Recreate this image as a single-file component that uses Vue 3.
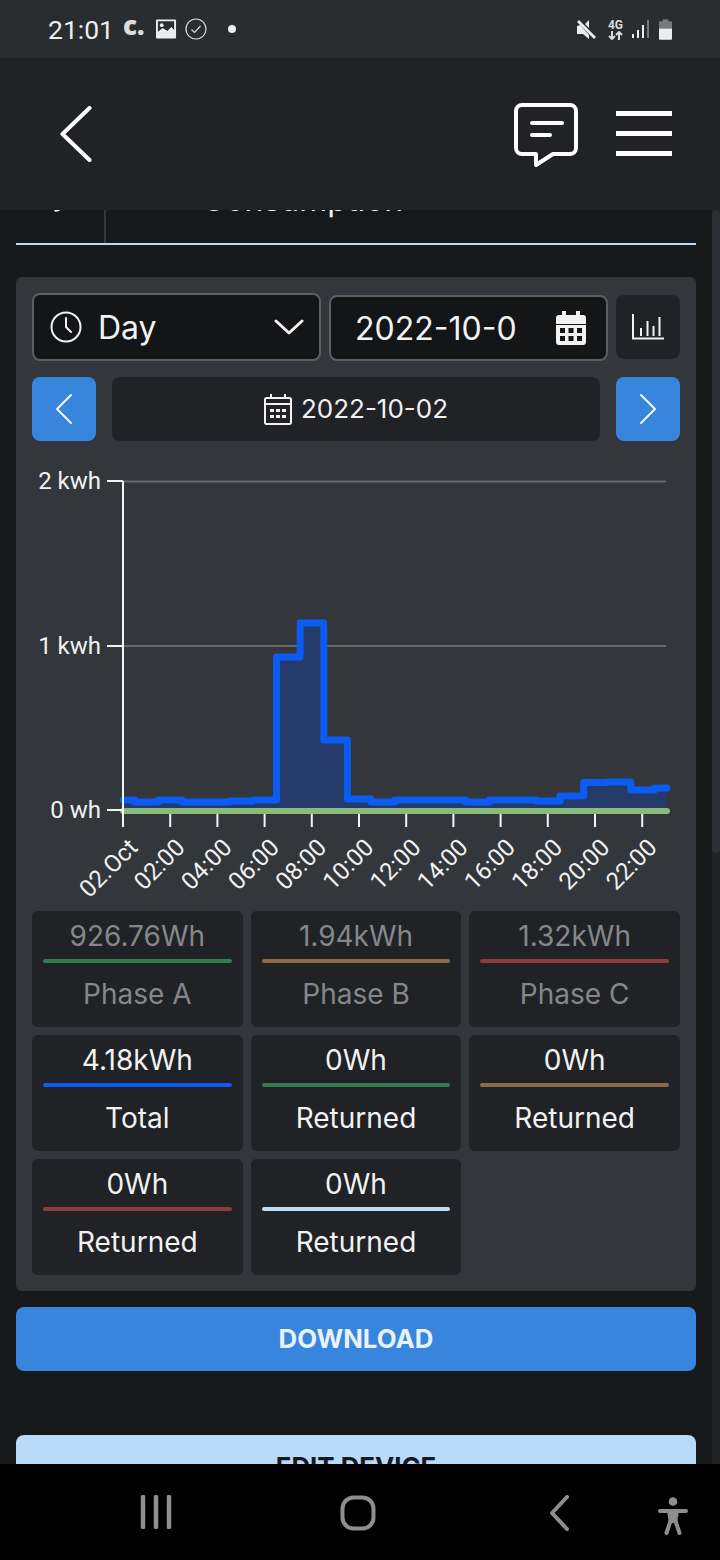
<script setup>
const hx = (h) => 123 + 23.62 * h
const values = [800,802,800,802,802,801,800,657,623,740,799,802,800,800,800,802,800,800,801,796,782.5,782,790,788]
let pts = []
values.forEach((v, i) => {
  const a = i === 0 ? 123 : hx(i) - 11.8
  const b = i === 23 ? 667 : hx(i) + 11.8
  pts.push(`${a.toFixed(1)},${v}`, `${b.toFixed(1)},${v}`)
})
const linePts = pts.join(' ')
const areaPts = `123,810 ${linePts} 667,810`
const yLabels = [
  { t: '2 kwh', y: 481 },
  { t: '1 kwh', y: 646 },
  { t: '0 wh', y: 810 }
]
const xLabels = ['02.Oct','02:00','04:00','06:00','08:00','10:00','12:00','14:00','16:00','18:00','20:00','22:00']
const ticks = xLabels.map((t, i) => ({ t, x: 123 + 47.2 * i }))
const cards = [
  { v: '926.76Wh', l: 'Phase A', c: '#2f7d50', off: true },
  { v: '1.94kWh', l: 'Phase B', c: '#8c6a45', off: true },
  { v: '1.32kWh', l: 'Phase C', c: '#8e3a3e', off: true },
  { v: '4.18kWh', l: 'Total', c: '#0b5cf2' },
  { v: '0Wh', l: 'Returned', c: '#2f7d50' },
  { v: '0Wh', l: 'Returned', c: '#8c6a45' },
  { v: '0Wh', l: 'Returned', c: '#8e3a3e' },
  { v: '0Wh', l: 'Returned', c: '#bcdcf8' }
]
</script>

<template>
  <div class="phone">
    <div class="status">
      <div class="status-left">
        <span class="time">21:01</span>
        <span class="c-mark">c.</span>
        <svg width="21" height="20" viewBox="0 0 22 20"><path fill="#eceded" fill-rule="evenodd" d="M1 0h19a1 1 0 0 1 1 1v18a1 1 0 0 1-1 1H1a1 1 0 0 1-1-1V1a1 1 0 0 1 1-1zM2 2v11l5-4 5 3 4-4 3 3V2z"/><circle cx="6" cy="6" r="2" fill="#eceded"/></svg>
        <svg class="check" width="22" height="22" viewBox="0 0 22 22"><circle cx="11" cy="11" r="10" fill="none" stroke="#d8d9da" stroke-width="1.2"/><path d="M6.5 11.5l3 3 6-6.5" fill="none" stroke="#d8d9da" stroke-width="1.2"/></svg>
        <span class="dot"></span>
      </div>
      <div class="status-right">
        <svg class="mute" width="20" height="21" viewBox="0 0 20 21"><path fill="#eceded" d="M0 7l3-1 9 10v4l-6-5H0zM12 1v8L8 5zM2 1l17 17-2 2L0 3z"/></svg>
        <div class="four-g"><span>4G</span><svg width="15" height="9" viewBox="0 0 15 9"><path fill="none" stroke="#d9dada" stroke-width="2" d="M4 0v8M1 5l3 3 3-3M11 9V1M8 4l3-3 3 3"/></svg></div>
        <svg width="18" height="20" viewBox="0 0 18 20"><rect x="0" y="15" width="2" height="4" fill="#eceded"/><rect x="5" y="11" width="2" height="8" fill="#eceded"/><rect x="10" y="6" width="2" height="13" fill="#eceded"/><rect x="15" y="1" width="2" height="18" fill="#77797b"/></svg>
        <svg width="13" height="21" viewBox="0 0 14 22"><path fill="#77797b" d="M4 0h6v2h3a1 1 0 0 1 1 1v7H0V3a1 1 0 0 1 1-1h3z"/><path fill="#eceded" d="M0 10h14v11a1 1 0 0 1-1 1H1a1 1 0 0 1-1-1z"/></svg>
      </div>
    </div>

    <header class="topbar">
      <svg class="back" width="32" height="56" viewBox="0 0 32 56"><path d="M29.500 2L2.500 28l27 26" fill="none" stroke="#fff" stroke-width="4" stroke-linecap="round" stroke-linejoin="round"/></svg>
      <div class="top-actions">
        <svg width="64" height="64" viewBox="0 0 64 64"><path d="M8 2h48a6 6 0 0 1 6 6v37a6 6 0 0 1-6 6H39l-17 11V51H8a6 6 0 0 1-6-6V8a6 6 0 0 1 6-6z" fill="none" stroke="#fff" stroke-width="4" stroke-linejoin="round"/><path d="M18 20h30M18 32h18" stroke="#fff" stroke-width="4" stroke-linecap="round" fill="none"/></svg>
        <div class="burger"><i></i><i></i><i></i></div>
      </div>
    </header>

    <main class="content">
      <div class="tabs">
        <div class="tab tab-a">y</div>
        <div class="tab tab-b">Consumption</div>
      </div>

      <section class="panel">
        <div class="row row-top">
          <div class="field select">
            <svg width="32" height="32" viewBox="0 0 32 32"><circle cx="16" cy="16" r="14.500" fill="none" stroke="#f2f2f2" stroke-width="2"/><path d="M16 7v9l5 5" fill="none" stroke="#f2f2f2" stroke-width="2" stroke-linecap="round"/></svg>
            <span class="field-text">Day</span>
            <svg class="chev" width="30" height="18" viewBox="0 0 30 18"><path d="M2 3l13 12L28 3" fill="none" stroke="#f2f2f2" stroke-width="3" stroke-linecap="round" stroke-linejoin="round"/></svg>
          </div>
          <div class="field date">
            <span class="field-text">2022-10-0</span>
            <svg width="30" height="34" viewBox="0 0 30 34"><path fill="#f2f2f2" fill-rule="evenodd" d="M6 0h4v4h10V0h4v4h3a3 3 0 0 1 3 3v6H0V7a3 3 0 0 1 3-3h3zM0 14h30v17a3 3 0 0 1-3 3H3a3 3 0 0 1-3-3zM4 17v5h5v-5zM12.500 17v5h5v-5zM21 17v5h5v-5zM4 25v5h5v-5zM12.500 25v5h5v-5zM21 25v5h5v-5z"/></svg>
          </div>
          <button class="icon-btn dark">
            <svg width="32" height="26" viewBox="0 0 32 26"><path d="M1 0v24.500h32M9 14v8M15.500 7v15M21.500 12v10M27.500 3v19" fill="none" stroke="#f2f2f2" stroke-width="2"/></svg>
          </button>
        </div>

        <div class="row row-nav">
          <button class="icon-btn blue">
            <svg width="16" height="30" viewBox="0 0 16 30"><path d="M15 1L1 15l14 14" fill="none" stroke="#f2f7fd" stroke-width="2" stroke-linecap="round" stroke-linejoin="round"/></svg>
          </button>
          <div class="date-bar">
            <svg width="28" height="32" viewBox="0 0 28 32"><path d="M2.500 5h23a1.500 1.500 0 0 1 1.500 1.500v23a1.500 1.500 0 0 1-1.500 1.500h-23A1.500 1.500 0 0 1 1 29.500v-23A1.500 1.500 0 0 1 2.500 5zM1 11h26M7 1v4M21 1v4" fill="none" stroke="#f2f2f2" stroke-width="2"/><path fill="#f2f2f2" d="M6 16h4v3H6zM12 16h4v3h-4zM18 16h4v3h-4zM6 22h4v3H6zM12 22h4v3h-4zM18 22h4v3h-4z"/></svg>
            <span>2022-10-02</span>
          </div>
          <button class="icon-btn blue">
            <svg width="16" height="30" viewBox="0 0 16 30"><path d="M1 1l14 14L1 29" fill="none" stroke="#f2f7fd" stroke-width="2" stroke-linecap="round" stroke-linejoin="round"/></svg>
          </button>
        </div>

        <svg class="chart" width="680" height="452" viewBox="16 457 680 452">
          <line x1="123" y1="481.500" x2="666" y2="481.500" stroke="#66686c" stroke-width="2"/>
          <line x1="123" y1="646" x2="666" y2="646" stroke="#66686c" stroke-width="2"/>
          <polygon :points="areaPts" fill="#243a68"/>
          <polyline :points="linePts" fill="none" stroke="#0b5cf2" stroke-width="7" stroke-linecap="round" stroke-linejoin="round"/>
          <line x1="123" y1="811" x2="667" y2="811" stroke="#89bb7a" stroke-width="6" stroke-linecap="round"/>
          <line x1="123" y1="481" x2="123" y2="826" stroke="#f5f5f5" stroke-width="2"/>
          <g v-for="l in yLabels" :key="l.t">
            <line x1="107" :y1="l.y" x2="123" :y2="l.y" stroke="#f5f5f5" stroke-width="2"/>
            <text class="axis-text" x="101" :y="l.y + 7.5" text-anchor="end">{{ l.t }}</text>
          </g>
          <g v-for="k in ticks" :key="k.t">
            <line :x1="k.x" y1="814" :x2="k.x" y2="827" stroke="#f5f5f5" stroke-width="2"/>
            <text class="axis-text" text-anchor="end" :transform="`translate(${k.x + 16} 849) rotate(-45)`">{{ k.t }}</text>
          </g>
        </svg>

        <div class="cards">
          <div v-for="(c, i) in cards" :key="i" class="card" :class="{ off: c.off }">
            <div class="card-value">{{ c.v }}</div>
            <div class="card-bar" :style="{ background: c.c }"></div>
            <div class="card-label">{{ c.l }}</div>
          </div>
        </div>
      </section>

      <button class="wide primary">DOWNLOAD</button>
      <button class="wide secondary">EDIT DEVICE</button>
      <div class="scroll-track"><div class="scroll-thumb"></div></div>
    </main>

    <nav class="navbar">
      <svg class="nav-recent" width="32" height="34" viewBox="0 0 32 34"><path d="M3 2v30M16 2v30M29 2v30" stroke="#8e8e8e" stroke-width="4.500" stroke-linecap="round"/></svg>
      <svg class="nav-home" width="36" height="36" viewBox="0 0 36 36"><rect x="2.500" y="2.500" width="31" height="31" rx="11" fill="none" stroke="#8e8e8e" stroke-width="4"/></svg>
      <svg class="nav-back" width="20" height="36" viewBox="0 0 20 36"><path d="M18 2L3 18l15 16" fill="none" stroke="#8e8e8e" stroke-width="4" stroke-linecap="round" stroke-linejoin="round"/></svg>
      <svg class="nav-a11y" width="32" height="42" viewBox="0 0 32 42"><circle cx="16" cy="4.500" r="4.300" fill="#8e8e8e"/><path d="M3 14h26M13.500 24L9.500 36M18.500 24l4 12" fill="none" stroke="#8e8e8e" stroke-width="4" stroke-linecap="round"/><path fill="#8e8e8e" d="M10 14h12l-2 12h-8z"/></svg>
    </nav>
  </div>
</template>

<style>
html, body { margin: 0; background: #16181a; }
</style>

<style scoped>
.phone {
  width: 720px;
  height: 1560px;
  display: flex;
  flex-direction: column;
  overflow: hidden;
  background: #16181a;
  font-family: Inter, "Liberation Sans", sans-serif;
  color: #f2f2f2;
}
.status {
  height: 58px;
  flex: none;
  background: #292d30;
  display: flex;
  align-items: center;
  justify-content: space-between;
  padding: 0 48px;
  font-family: Roboto, sans-serif;
  color: #eceded;
}
.status-left, .status-right { display: flex; align-items: center; }
.time { font-size: 26.500px; margin-right: 9px; }
.c-mark { font-family: "Open Sans", sans-serif; font-weight: 800; font-size: 26px; line-height: 24px; margin: -8px 11px 0 0; width: 22px; color: #dcdddd; }
.check { margin-left: 8px; }
.dot { width: 8px; height: 8px; border-radius: 50%; background: #eceded; margin-left: 21px; }
.status-right { gap: 9px; }
.mute { margin-right: 2px; }
.four-g { display: flex; flex-direction: column; align-items: center; width: 15px; font-size: 12px; font-weight: 700; line-height: 12px; color: #d9dada; }
.topbar {
  height: 152px;
  flex: none;
  background: #202225;
  display: flex;
  align-items: center;
  justify-content: space-between;
  padding: 0 48px 0 60px;
  position: relative;
  z-index: 1;
}
.top-actions { display: flex; align-items: center; gap: 37px; }
.top-actions svg { margin-top: 2px; margin-right: 1px; }
.burger { width: 56px; display: flex; flex-direction: column; gap: 15px; margin-top: -2px; }
.burger i { display: block; height: 5px; background: #fff; }
.content { flex: 1; min-height: 0; overflow: hidden; position: relative; padding: 0 24px 0 16px; }
.tabs {
  height: 33px;
  display: flex;
  border-bottom: 2px solid #bcd9f5;
  width: 680px;
  overflow: hidden;
}
.tab { color: #f2f2f2; font-size: 32px; line-height: 32px; height: 61px; }
.tab-a { width: 90px; padding-left: 36px; box-sizing: border-box; border-right: 2px solid #33363a; margin-top: -32px; height: 65px; }
.tab-b { margin-left: 96px; margin-top: -26px; }
.panel {
  margin-top: 32px;
  width: 680px;
  height: 1014px;
  box-sizing: border-box;
  background: #33363b;
  border-radius: 6px;
  padding: 16px;
}
.row { display: flex; }
.row-top { height: 68px; gap: 8px; align-items: center; }
.field {
  box-sizing: border-box;
  border: 2px solid #5c5e62;
  border-radius: 8px;
  background: #141517;
  display: flex;
  align-items: center;
}
.select { width: 289px; height: 68px; padding: 0 15px 0 16px; }
.field-text { font-size: 32px; color: #f2f2f2; }
.select .field-text { margin-left: 16px; }
.chev { margin-left: auto; }
.date { width: 279px; height: 66px; align-self: flex-end; padding: 0 20px 0 24px; justify-content: space-between; }
.icon-btn {
  width: 64px;
  height: 64px;
  flex: none;
  border: 0;
  border-radius: 8px;
  padding: 0;
  display: flex;
  align-items: center;
  justify-content: center;
}
.dark { background: #202225; }
.blue { background: #3885dd; }
.row-nav { margin-top: 16px; height: 64px; gap: 16px; }
.date-bar {
  flex: 1;
  background: #202225;
  border-radius: 8px;
  display: flex;
  align-items: center;
  justify-content: center;
  gap: 9px;
  font-size: 26px;
  color: #f0f0f0;
  padding-bottom: 1px;
  box-sizing: border-box;
}
.chart { display: block; margin: 16px 0 0 -16px; }
.axis-text { font-family: Roboto, sans-serif; font-size: 24px; fill: #f2f2f2; }
.cards {
  margin-top: 2px;
  display: grid;
  grid-template-columns: repeat(3, 1fr);
  grid-auto-rows: 116px;
  gap: 8px;
}
.card {
  background: #202225;
  border-radius: 6px;
  padding: 0 11px;
  display: flex;
  flex-direction: column;
  align-items: stretch;
  text-align: center;
}
.card-value { font-size: 28px; line-height: 32px; margin-top: 9px; }
.card-bar { height: 4px; border-radius: 2px; margin-top: 7px; }
.card-label { font-size: 28px; line-height: 32px; margin-top: 15px; }
.off .card-value, .off .card-label { color: #85878b; }
.wide {
  display: block;
  width: 680px;
  height: 64px;
  border: 0;
  border-radius: 8px;
  font-family: Inter, sans-serif;
  font-size: 25.800px;
  font-weight: 700;
  padding: 0 0 2px;
}
.primary { margin-top: 16px; background: #3885dd; color: #e8f2fc; }
.secondary { margin-top: 64px; background: #b9daf8; color: #17191c; }
.scroll-track { position: absolute; right: 0; top: 0; bottom: 0; width: 8px; background: #1f2124; }
.scroll-thumb { height: 643px; background: #2c2f33; border-radius: 4px; }
.navbar {
  height: 96px;
  flex: none;
  background: #000;
  position: relative;
  z-index: 1;
}
.navbar svg { position: absolute; }
.nav-recent { left: 140px; top: 31px; }
.nav-home { left: 340px; top: 31px; }
.nav-back { left: 549px; top: 31px; }
.nav-a11y { left: 657px; top: 33px; }
</style>
